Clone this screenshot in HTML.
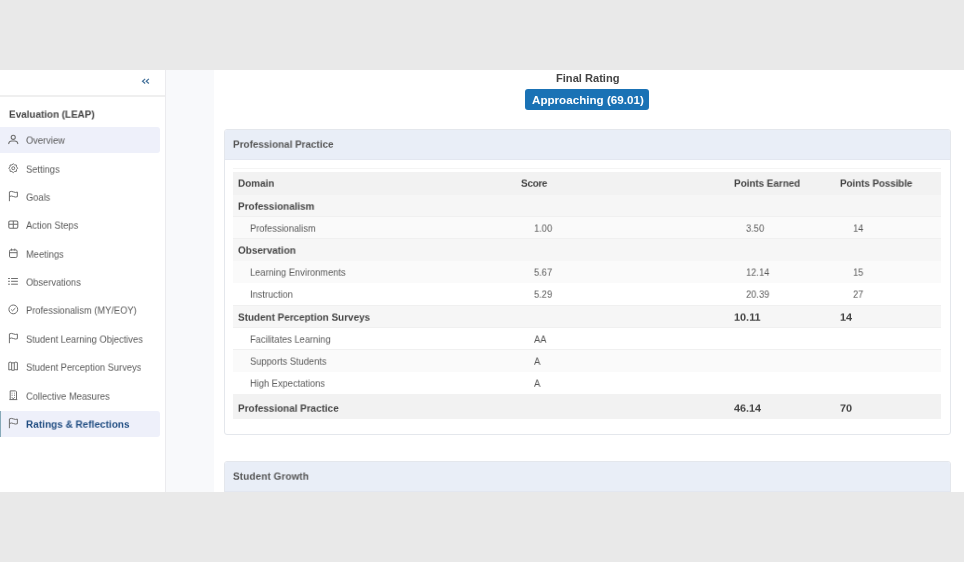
<!DOCTYPE html>
<html><head><meta charset="utf-8"><style>
html,body{margin:0;padding:0;width:964px;height:562px;overflow:hidden;background:#e9e9e9;font-family:"Liberation Sans",sans-serif;}
.b{position:absolute;display:block}
.t{position:absolute;white-space:nowrap;line-height:20px;height:20px;will-change:transform;transform-origin:0 0}
</style></head><body>
<div class="b" style="left:0.00px;top:70.00px;width:964.00px;height:422.00px;background:#fff"></div>
<div class="b" style="left:165.00px;top:70.00px;width:1.00px;height:422.00px;background:#ebebee"></div>
<div class="b" style="left:166.00px;top:70.00px;width:48.00px;height:422.00px;background:#f8f9fb"></div>
<div class="b" style="left:0.00px;top:95.00px;width:165.00px;height:2.00px;background:#efefef"></div>
<svg class="b" style="left:140px;top:76px" width="12" height="10" viewBox="0 0 12 10"><path d="M5.2 2.9 L2.5 5.2 L5.2 7.5 M8.9 2.9 L6.2 5.2 L8.9 7.5" fill="none" stroke="#42709a" stroke-width="1.2"/></svg>
<div class="t" style="left:9.07px;top:105.70px;font-size:10.00px;font-weight:700;letter-spacing:-0.007px;transform:scale(0.9900,0.9000);color:#444;">Evaluation (LEAP)</div>
<div class="b" style="left:0.00px;top:127.20px;width:160.30px;height:25.80px;background:#eef0fa;border-radius:0 3px 3px 0"></div>
<svg class="b" style="left:0px;top:127.20px" width="24" height="25" viewBox="0 0 24 25"><circle cx="13.25" cy="10.3" r="2.05" fill="none" stroke="#6e6e6e" stroke-width="1.05"/><path d="M8.7 16.6 C8.9 14.8 10.3 13.9 11.8 13.9 L14.7 13.9 C16.2 13.9 17.6 14.8 17.8 16.6" fill="none" stroke="#6e6e6e" stroke-width="1.05" stroke-linecap="round"/></svg>
<div class="t" style="left:25.90px;top:132.20px;font-size:10.00px;transform:scale(0.9300,0.9000);color:#585858;">Overview</div>
<svg class="b" style="left:0px;top:155.58px" width="24" height="25" viewBox="0 0 24 25"><path d="M13.25 7.75 L14.61 8.92 L16.40 9.05 L16.53 10.84 L17.70 12.20 L16.53 13.56 L16.40 15.35 L14.61 15.48 L13.25 16.65 L11.89 15.48 L10.10 15.35 L9.97 13.56 L8.80 12.20 L9.97 10.84 L10.10 9.05 L11.89 8.92 Z" fill="none" stroke="#6e6e6e" stroke-width="0.95" stroke-linejoin="round"/><circle cx="13.25" cy="12.2" r="1.5" fill="none" stroke="#6e6e6e" stroke-width="0.95"/></svg>
<div class="t" style="left:25.90px;top:160.58px;font-size:10.00px;transform:scale(0.9300,0.9000);color:#585858;">Settings</div>
<svg class="b" style="left:0px;top:183.96px" width="24" height="25" viewBox="0 0 24 25"><path d="M9.4 17.2 L9.4 7.9 Q11.4 6.9 13.4 7.9 Q15.4 8.9 17.4 8.1 L17.4 12.7 Q15.4 13.5 13.4 12.5 Q11.4 11.5 9.4 12.5" fill="none" stroke="#6e6e6e" stroke-width="1"/></svg>
<div class="t" style="left:25.90px;top:188.96px;font-size:10.00px;transform:scale(0.9300,0.9000);color:#585858;">Goals</div>
<svg class="b" style="left:0px;top:212.34px" width="24" height="25" viewBox="0 0 24 25"><rect x="8.8" y="8.9" width="9" height="7.3" rx="1.2" fill="none" stroke="#6e6e6e" stroke-width="1.05"/><path d="M13.3 8.9 L13.3 16.2 M8.8 12.3 L17.8 12.3" stroke="#6e6e6e" stroke-width="1.05"/></svg>
<div class="t" style="left:25.90px;top:217.34px;font-size:10.00px;transform:scale(0.9300,0.9000);color:#585858;">Action Steps</div>
<svg class="b" style="left:0px;top:240.72px" width="24" height="25" viewBox="0 0 24 25"><rect x="9.5" y="8.9" width="7.6" height="7.6" rx="1.3" fill="none" stroke="#6e6e6e" stroke-width="1"/><path d="M9.5 11.7 L17.1 11.7 M11.5 7.6 L11.5 9.6 M14.8 7.6 L14.8 9.6" stroke="#6e6e6e" stroke-width="1"/></svg>
<div class="t" style="left:25.90px;top:245.72px;font-size:10.00px;transform:scale(0.9300,0.9000);color:#585858;">Meetings</div>
<svg class="b" style="left:0px;top:269.10px" width="24" height="25" viewBox="0 0 24 25"><path d="M8.1 9.5 L9.9 9.5 M11.1 9.5 L17.9 9.5 M8.1 12.3 L9.9 12.3 M11.1 12.3 L17.9 12.3 M8.1 15.2 L9.9 15.2 M11.1 15.2 L17.9 15.2" stroke="#6e6e6e" stroke-width="1"/></svg>
<div class="t" style="left:25.90px;top:274.10px;font-size:10.00px;transform:scale(0.9300,0.9000);color:#585858;">Observations</div>
<svg class="b" style="left:0px;top:297.48px" width="24" height="25" viewBox="0 0 24 25"><circle cx="13.3" cy="12.4" r="4.4" fill="none" stroke="#6e6e6e" stroke-width="1"/><path d="M11.2 12.5 L12.5 13.8 L15.4 11.1" fill="none" stroke="#6e6e6e" stroke-width="1"/></svg>
<div class="t" style="left:25.90px;top:302.48px;font-size:10.00px;transform:scale(0.9300,0.9000);color:#585858;">Professionalism (MY/EOY)</div>
<svg class="b" style="left:0px;top:325.86px" width="24" height="25" viewBox="0 0 24 25"><path d="M9.4 17.2 L9.4 7.9 Q11.4 6.9 13.4 7.9 Q15.4 8.9 17.4 8.1 L17.4 12.7 Q15.4 13.5 13.4 12.5 Q11.4 11.5 9.4 12.5" fill="none" stroke="#6e6e6e" stroke-width="1"/></svg>
<div class="t" style="left:25.90px;top:330.86px;font-size:10.00px;transform:scale(0.9300,0.9000);color:#585858;">Student Learning Objectives</div>
<svg class="b" style="left:0px;top:354.24px" width="24" height="25" viewBox="0 0 24 25"><path d="M8.8 8.6 Q10.2 7.6 11.65 8.6 Q13 9.4 14.3 8.6 Q15.8 7.6 17.4 8.6 L17.4 16 Q15.8 15.2 14.3 16 Q13 16.8 11.65 16 Q10.2 15.2 8.8 16 Z M11.65 8.6 L11.65 16 M14.3 8.6 L14.3 16" fill="none" stroke="#6e6e6e" stroke-width="1"/></svg>
<div class="t" style="left:25.90px;top:359.24px;font-size:10.00px;transform:scale(0.9300,0.9000);color:#585858;">Student Perception Surveys</div>
<svg class="b" style="left:0px;top:382.62px" width="24" height="25" viewBox="0 0 24 25"><path d="M10.2 16.5 L10.2 7.9 L15.6 7.9 L16.5 8.8 L16.5 16.5" fill="none" stroke="#6e6e6e" stroke-width="1"/><path d="M9.4 16.6 L17.3 16.6" stroke="#6e6e6e" stroke-width="1"/><path d="M11.6 9.7h1v0.9h-1z M14 9.7h1v0.9h-1z M11.6 11.8h1v0.9h-1z M14 11.8h1v0.9h-1z M11.6 13.9h1v0.9h-1z M14 13.9h1v0.9h-1z M12.4 15.2h1.6v1.3h-1.6z" fill="#6e6e6e"/></svg>
<div class="t" style="left:25.90px;top:387.62px;font-size:10.00px;transform:scale(0.9300,0.9000);color:#585858;">Collective Measures</div>
<div class="b" style="left:0.00px;top:411.00px;width:160.30px;height:25.80px;background:#eef0fa;border-radius:0 3px 3px 0"></div>
<div class="b" style="left:0.00px;top:411.00px;width:1.20px;height:25.80px;background:#86a9b8"></div>
<svg class="b" style="left:0px;top:411.00px" width="24" height="25" viewBox="0 0 24 25"><path d="M9.4 17.2 L9.4 7.9 Q11.4 6.9 13.4 7.9 Q15.4 8.9 17.4 8.1 L17.4 12.7 Q15.4 13.5 13.4 12.5 Q11.4 11.5 9.4 12.5" fill="none" stroke="#6e6e6e" stroke-width="1"/></svg>
<div class="t" style="left:25.90px;top:416.00px;font-size:10.00px;font-weight:700;letter-spacing:0.060px;transform:scale(0.9900,0.9000);color:#1e4b80;">Ratings &amp; Reflections</div>
<div class="t" style="left:555.64px;top:68.25px;font-size:11.10px;font-weight:700;color:#444;">Final Rating</div>
<div class="b" style="left:525.00px;top:89.00px;width:124.00px;height:21.00px;background:#1a72b5;border-radius:3px"></div>
<div class="t" style="left:531.60px;top:89.88px;font-size:11.60px;font-weight:700;letter-spacing:0.016px;color:#fff;">Approaching (69.01)</div>
<div class="b" style="left:224.00px;top:128.50px;width:727.00px;height:306.30px;background:#fff;border:1px solid #e4e7ec;border-radius:3px;box-sizing:border-box"></div>
<div class="b" style="left:225.00px;top:129.50px;width:725.00px;height:29.00px;background:#e9eef7;border-radius:2px 2px 0 0"></div>
<div class="b" style="left:225.00px;top:158.50px;width:725.00px;height:1.00px;background:#e3e7f0"></div>
<div class="t" style="left:233.40px;top:136.10px;font-size:10.00px;font-weight:700;letter-spacing:-0.010px;transform:scale(0.9900,0.9000);color:#555;">Professional Practice</div>
<div class="b" style="left:224.00px;top:461.30px;width:727.00px;height:78.70px;background:#fff;border:1px solid #e4e7ec;border-radius:3px;box-sizing:border-box"></div>
<div class="b" style="left:225.00px;top:462.30px;width:725.00px;height:29.00px;background:#e9eef7;border-radius:2px 2px 0 0"></div>
<div class="b" style="left:225.00px;top:491.30px;width:725.00px;height:1.00px;background:#e3e7f0"></div>
<div class="t" style="left:233.40px;top:468.40px;font-size:10.00px;font-weight:700;letter-spacing:0.129px;transform:scale(0.9900,0.9000);color:#555;">Student Growth</div>
<div class="b" style="left:233.00px;top:168.00px;width:708.00px;height:1.00px;background:#f4f4f4"></div>
<div class="b" style="left:233.00px;top:172.00px;width:708.00px;height:22.50px;background:#f2f2f2"></div>
<div class="t" style="left:238.00px;top:175.00px;font-size:10.00px;font-weight:700;transform:scale(0.9900,0.9000);color:#444;">Domain</div>
<div class="t" style="left:521.40px;top:175.00px;font-size:10.00px;font-weight:700;letter-spacing:-0.281px;transform:scale(0.9900,0.9000);color:#444;">Score</div>
<div class="t" style="left:733.80px;top:175.00px;font-size:10.00px;font-weight:700;letter-spacing:-0.031px;transform:scale(0.9900,0.9000);color:#444;">Points Earned</div>
<div class="t" style="left:840.00px;top:175.00px;font-size:10.00px;font-weight:700;letter-spacing:-0.095px;transform:scale(0.9900,0.9000);color:#444;">Points Possible</div>
<div class="b" style="left:233.00px;top:194.50px;width:708.00px;height:22.20px;background:#f6f6f6"></div>
<div class="b" style="left:233.00px;top:216.20px;width:708.00px;height:1.00px;background:#f0f0f0"></div>
<div class="t" style="left:238.00px;top:197.50px;font-size:10.00px;font-weight:700;transform:scale(0.9900,0.9000);color:#444;">Professionalism</div>
<div class="b" style="left:233.00px;top:216.70px;width:708.00px;height:22.20px;background:#fafafa"></div>
<div class="b" style="left:233.00px;top:238.40px;width:708.00px;height:1.00px;background:#f0f0f0"></div>
<div class="t" style="left:250.40px;top:219.70px;font-size:10.00px;transform:scale(0.9300,0.9000);color:#585858;">Professionalism</div>
<div class="t" style="left:534.00px;top:219.70px;font-size:10.00px;transform:scale(0.9300,0.9000);color:#585858;">1.00</div>
<div class="t" style="left:746.00px;top:219.70px;font-size:10.00px;transform:scale(0.9300,0.9000);color:#585858;">3.50</div>
<div class="t" style="left:852.50px;top:219.70px;font-size:10.00px;transform:scale(0.9300,0.9000);color:#585858;">14</div>
<div class="b" style="left:233.00px;top:238.90px;width:708.00px;height:22.20px;background:#f6f6f6"></div>
<div class="b" style="left:233.00px;top:260.60px;width:708.00px;height:1.00px;background:#f0f0f0"></div>
<div class="t" style="left:238.00px;top:241.90px;font-size:10.00px;font-weight:700;transform:scale(0.9900,0.9000);color:#444;">Observation</div>
<div class="b" style="left:233.00px;top:261.10px;width:708.00px;height:22.20px;background:#fafafa"></div>
<div class="b" style="left:233.00px;top:282.80px;width:708.00px;height:1.00px;background:#f0f0f0"></div>
<div class="t" style="left:250.40px;top:264.10px;font-size:10.00px;transform:scale(0.9300,0.9000);color:#585858;">Learning Environments</div>
<div class="t" style="left:534.00px;top:264.10px;font-size:10.00px;transform:scale(0.9300,0.9000);color:#585858;">5.67</div>
<div class="t" style="left:746.00px;top:264.10px;font-size:10.00px;transform:scale(0.9300,0.9000);color:#585858;">12.14</div>
<div class="t" style="left:852.50px;top:264.10px;font-size:10.00px;transform:scale(0.9300,0.9000);color:#585858;">15</div>
<div class="b" style="left:233.00px;top:283.30px;width:708.00px;height:22.20px;background:#ffffff"></div>
<div class="b" style="left:233.00px;top:305.00px;width:708.00px;height:1.00px;background:#f0f0f0"></div>
<div class="t" style="left:250.40px;top:286.30px;font-size:10.00px;transform:scale(0.9300,0.9000);color:#585858;">Instruction</div>
<div class="t" style="left:534.00px;top:286.30px;font-size:10.00px;transform:scale(0.9300,0.9000);color:#585858;">5.29</div>
<div class="t" style="left:746.00px;top:286.30px;font-size:10.00px;transform:scale(0.9300,0.9000);color:#585858;">20.39</div>
<div class="t" style="left:852.50px;top:286.30px;font-size:10.00px;transform:scale(0.9300,0.9000);color:#585858;">27</div>
<div class="b" style="left:233.00px;top:305.50px;width:708.00px;height:22.20px;background:#f6f6f6"></div>
<div class="b" style="left:233.00px;top:327.20px;width:708.00px;height:1.00px;background:#f0f0f0"></div>
<div class="t" style="left:238.00px;top:308.50px;font-size:10.00px;font-weight:700;transform:scale(0.9900,0.9000);color:#444;">Student Perception Surveys</div>
<div class="t" style="left:734.00px;top:308.50px;font-size:10.00px;font-weight:700;transform:scale(1.0900,0.9000);color:#444;">10.11</div>
<div class="t" style="left:840.20px;top:308.50px;font-size:10.00px;font-weight:700;transform:scale(1.0900,0.9000);color:#444;">14</div>
<div class="b" style="left:233.00px;top:327.70px;width:708.00px;height:22.20px;background:#ffffff"></div>
<div class="b" style="left:233.00px;top:349.40px;width:708.00px;height:1.00px;background:#f0f0f0"></div>
<div class="t" style="left:250.40px;top:330.70px;font-size:10.00px;transform:scale(0.9300,0.9000);color:#585858;">Facilitates Learning</div>
<div class="t" style="left:534.00px;top:330.70px;font-size:10.00px;transform:scale(0.9300,0.9000);color:#585858;">AA</div>
<div class="b" style="left:233.00px;top:349.90px;width:708.00px;height:22.20px;background:#fafafa"></div>
<div class="b" style="left:233.00px;top:371.60px;width:708.00px;height:1.00px;background:#f0f0f0"></div>
<div class="t" style="left:250.40px;top:352.90px;font-size:10.00px;transform:scale(0.9300,0.9000);color:#585858;">Supports Students</div>
<div class="t" style="left:534.00px;top:352.90px;font-size:10.00px;transform:scale(0.9300,0.9000);color:#585858;">A</div>
<div class="b" style="left:233.00px;top:372.10px;width:708.00px;height:22.20px;background:#ffffff"></div>
<div class="b" style="left:233.00px;top:393.80px;width:708.00px;height:1.00px;background:#f0f0f0"></div>
<div class="t" style="left:250.40px;top:375.10px;font-size:10.00px;transform:scale(0.9300,0.9000);color:#585858;">High Expectations</div>
<div class="t" style="left:534.00px;top:375.10px;font-size:10.00px;transform:scale(0.9300,0.9000);color:#585858;">A</div>
<div class="b" style="left:233.00px;top:394.30px;width:708.00px;height:25.20px;background:#f2f2f2"></div>
<div class="t" style="left:238.00px;top:399.50px;font-size:10.00px;font-weight:700;transform:scale(0.9900,0.9000);color:#444;">Professional Practice</div>
<div class="t" style="left:734.00px;top:399.50px;font-size:10.00px;font-weight:700;transform:scale(1.0800,0.9000);color:#444;">46.14</div>
<div class="t" style="left:840.20px;top:399.50px;font-size:10.00px;font-weight:700;transform:scale(1.0900,0.9000);color:#444;">70</div>
<div class="b" style="left:0.00px;top:492.00px;width:964.00px;height:70.00px;background:#e9e9e9"></div>
</body></html>
